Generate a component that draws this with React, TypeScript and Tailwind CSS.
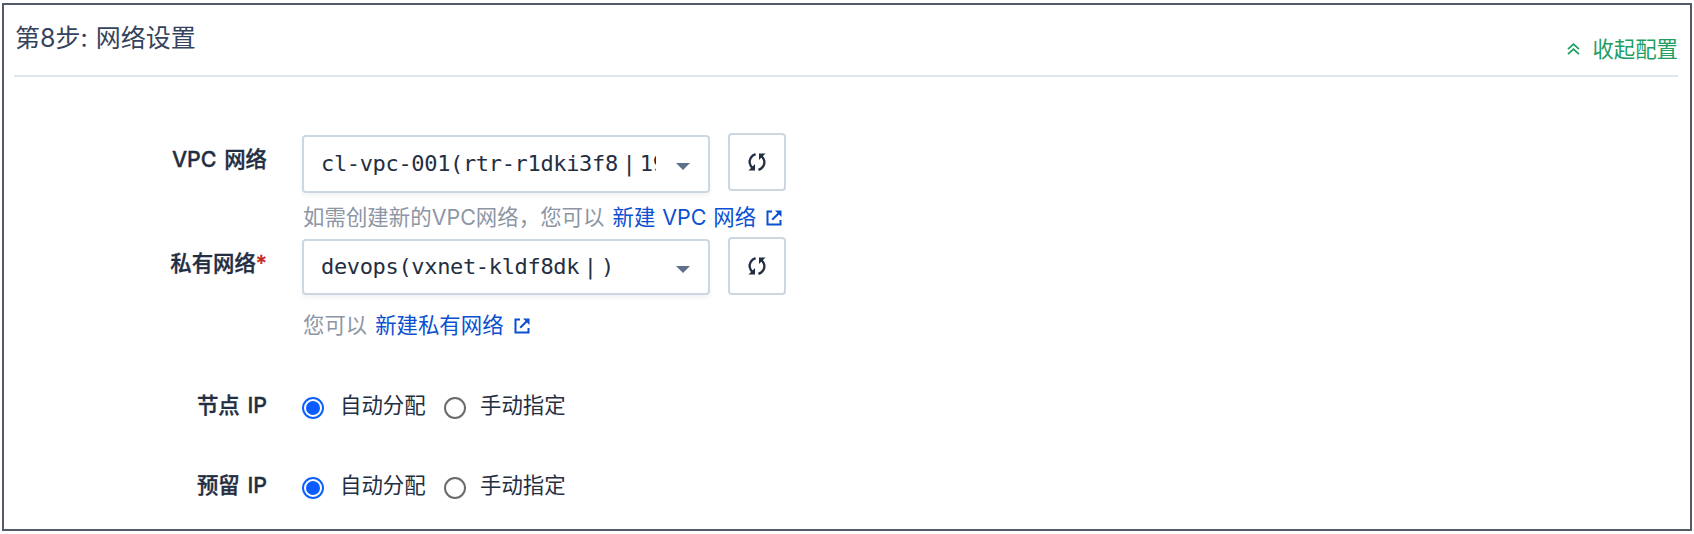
import type { ReactNode } from "react";

function RefreshIcon() {
  return (
    <svg width="20" height="20" viewBox="0 0 20 20" className="block" fill="none" stroke="#242e42" strokeWidth="2.3">
      <path d="M8.6 2.2C4.400 3.300 1.700 7.500 2.900 11.800C3.400 13.500 4.200 14.800 5.300 15.700" />
      <path d="M11.400 17.800C15.600 16.700 18.300 12.500 17.100 8.200C16.600 6.500 15.800 5.200 14.700 4.300" />
      <path d="M1.500 18.600H8V12.100Z" fill="#242e42" stroke="none" />
      <path d="M18.500 1.400H12V7.900Z" fill="#242e42" stroke="none" />
    </svg>
  );
}

function ExternalIcon() {
  return (
    <svg width="16" height="16" viewBox="0 0 16 16" className="block" fill="none" stroke="#0b50d0" strokeWidth="2">
      <path d="M6 1.500H1.500V14.500H14.500V10" />
      <path d="M6.200 9.800L12.800 3.200" />
      <path d="M9 0.500H15.500V7Z" fill="#0b50d0" stroke="none" />
    </svg>
  );
}

function Label({ children, required }: { children: ReactNode; required?: boolean }) {
  return (
    <div className="w-[263px] shrink-0 text-right font-medium leading-[32px] text-[#242e42] [word-spacing:2px] [-webkit-text-stroke:0.35px_currentColor]">
      {children}
      {required && <span className="text-[#ca2621]">*</span>}
    </div>
  );
}

function Bar() {
  return <span className="inline-block w-[22px] text-center">|</span>;
}

function Select({ children, className }: { children: ReactNode; className: string }) {
  return (
    <div
      className={`flex w-[408px] items-center rounded-[4px] border-2 border-[#ccd7e2] bg-white pl-[17px] pr-[18px] shadow-[0_3px_4px_rgba(36,46,66,0.06)] ${className}`}
    >
      <div className="w-[335px] overflow-hidden whitespace-nowrap font-['DejaVu_Sans_Mono',monospace] text-[22px] leading-[32px] tracking-[-0.340px] text-[#242e42]">
        {children}
      </div>
      <svg width="14" height="7" viewBox="0 0 14 7" className="ml-auto mt-[4px] block">
        <path d="M0 0H14L7 7Z" fill="#5f708a" />
      </svg>
    </div>
  );
}

function RefreshButton() {
  return (
    <button className="ml-[18px] flex h-[58px] w-[58px] items-center justify-center rounded-[4px] border-2 border-[#ccd7e2] bg-white">
      <RefreshIcon />
    </button>
  );
}

function RadioRow({ label, className }: { label: string; className: string }) {
  return (
    <div className={`flex h-[32px] items-center ${className}`}>
      <Label>{label}</Label>
      <div className="ml-[35px] mt-[6px] flex h-[22px] w-[22px] items-center justify-center rounded-full border-2 border-[#0f62ff]">
        <div className="h-[14px] w-[14px] rounded-full bg-[#0b5cff]" />
      </div>
      <span className="ml-[16px] w-[86px]">自动分配</span>
      <div className="ml-[18px] mt-[6px] h-[22px] w-[22px] rounded-full border-2 border-[#6b6b6b]" />
      <span className="ml-[14px]">手动指定</span>
    </div>
  );
}

export default function App() {
  return (
    <div className="h-[534px] w-[1694px] overflow-hidden bg-white pl-[2px] pt-[3px] font-['Inter','Noto_Sans_CJK_SC',sans-serif] text-[21.400px] leading-[32px] text-[#242e42]">
      <div className="h-[528px] w-[1690px] border-2 border-[#555b69]">
        <header className="ml-[10px] mr-[12px] flex h-[72px] justify-between border-b-2 border-[#dce7f0]">
          <h1 className="pl-px pt-[16px] text-[25px] leading-[34px] text-[#36435c] [word-spacing:1px]">
            第8步: 网络设置
          </h1>
          <div className="mt-[28px] flex h-[32px] items-center gap-[12px] self-start text-[#1f9d63]">
            <svg width="13" height="12" viewBox="0 0 12 12" fill="none" stroke="currentColor" strokeWidth="1.800">
              <path d="M0.500 6.200L6 1.200L11.500 6.200M0.500 11.200L6 6.200L11.500 11.200" />
            </svg>
            <span>收起配置</span>
          </div>
        </header>

        <div className="box-content flex h-[68px] pt-[56px]">
          <div className="pt-[10px]">
            <Label>VPC 网络</Label>
          </div>
          <div className="ml-[35px] pt-[2px]">
            <Select className="h-[58px]">
              cl-vpc-001(rtr-r1dki3f8
              <Bar />
              19
            </Select>
          </div>
          <RefreshButton />
        </div>
        <div className="flex h-[36px] items-center pb-[5px] pl-[299px] text-[#8c96a5]">
          <span className="tracking-[0.050px]">如需创建新的VPC网络，您可以</span>
          <a className="ml-[8px] text-[#0b50d0] [word-spacing:1px]">新建 VPC 网络</a>
          <span className="ml-[10px] mt-[2px]">
            <ExternalIcon />
          </span>
        </div>

        <div className="flex h-[72px]">
          <div className="pt-[10px]">
            <Label required>私有网络</Label>
          </div>
          <div className="ml-[35px] pt-[2px]">
            <Select className="h-[56px]">
              devops(vxnet-kldf8dk
              <Bar />)
            </Select>
          </div>
          <RefreshButton />
        </div>
        <div className="flex h-[32px] items-center pl-[299px] text-[#8c96a5]">
          <span>您可以</span>
          <a className="ml-[8px] text-[#0b50d0]">新建私有网络</a>
          <span className="ml-[10px] mt-[2px]">
            <ExternalIcon />
          </span>
        </div>

        <RadioRow label="节点 IP" className="mt-[48px]" />
        <RadioRow label="预留 IP" className="mt-[48px]" />
      </div>
    </div>
  );
}
